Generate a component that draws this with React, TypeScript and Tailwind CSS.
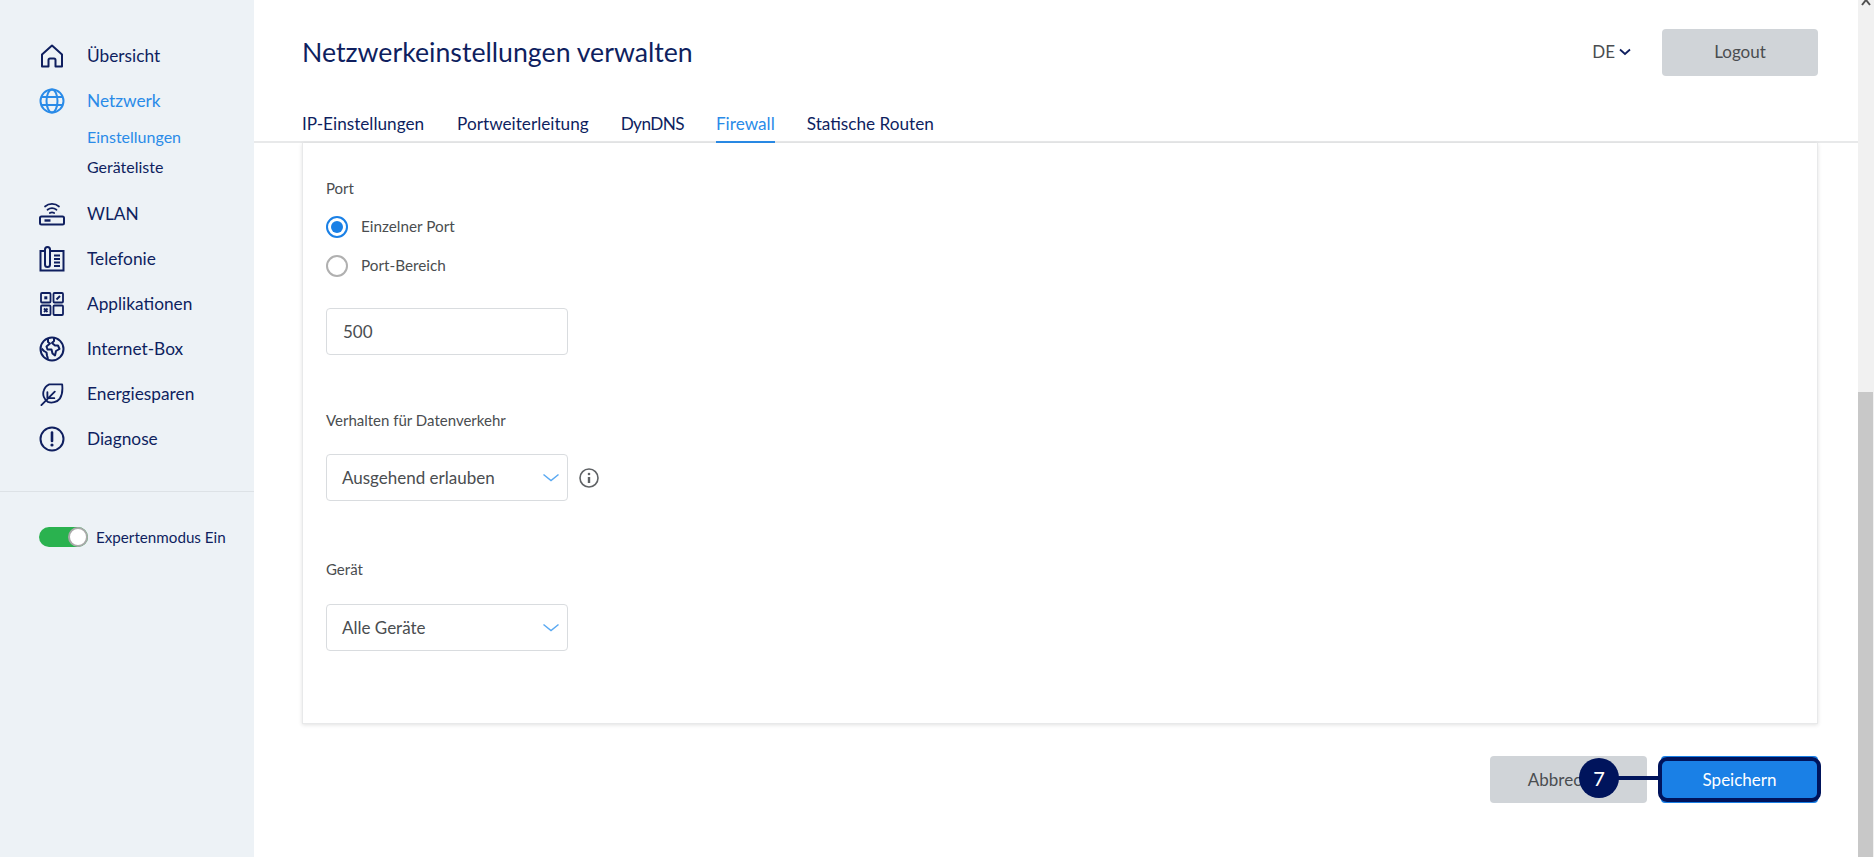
import React from 'react';

const Navy = '#0f1f5f';

const HomeIcon = () => (
  <svg width="26" height="26" viewBox="0 0 26 26" fill="none" stroke="currentColor" strokeWidth="2" strokeLinejoin="round">
    <path d="M3 11.5 13 2.5l10 9V23.5h-6.5V17a1.5 1.5 0 0 0-1.5-1.5h-4A1.5 1.5 0 0 0 9.5 17v6.5H3z" />
  </svg>
);

const GlobeIcon = () => (
  <svg width="26" height="26" viewBox="0 0 26 26" fill="none" stroke="currentColor" strokeWidth="2">
    <circle cx="13" cy="13" r="11.5" />
    <ellipse cx="13" cy="13" rx="5.5" ry="11.5" />
    <path d="M2.5 9h21M2.5 17h21" />
  </svg>
);

const WlanIcon = () => (
  <svg width="26" height="26" viewBox="0 0 26 26" fill="none" stroke="currentColor" strokeWidth="2" strokeLinecap="round">
    <rect x="1" y="15.5" width="24" height="8" rx="1.5" />
    <path d="M5.5 19.500h6" strokeWidth="2.400" strokeLinecap="butt" />
    <path d="M6 5.500c4-3.400 10-3.400 14 0M8.500 8.800c2.700-2 6.300-2 9 0M10.800 12c1.300-.8 3.100-.8 4.400 0" strokeWidth="1.700" />
  </svg>
);

const PhoneIcon = () => (
  <svg width="26" height="26" viewBox="0 0 26 26" fill="none" stroke="currentColor" strokeWidth="2">
    <path d="M6 5H1.500v19.500h23V5H11" />
    <rect x="6" y="1" width="5" height="20" rx="2.500" />
    <path d="M15 9.500h6M15 13h6M15 16.500h6M15 20h6" strokeWidth="1.800" />
  </svg>
);

const AppsIcon = () => (
  <svg width="24" height="24" viewBox="0 0 24 24" fill="none" stroke="currentColor" strokeWidth="1.800">
    <rect x="1" y="1" width="9.500" height="9.500" rx="1" />
    <rect x="13.500" y="1" width="9.500" height="9.500" rx="1" />
    <rect x="1" y="13.500" width="9.500" height="9.500" rx="1" />
    <rect x="13.500" y="13.500" width="9.500" height="9.500" rx="1" />
    <rect x="4.300" y="4.300" width="3" height="3" fill="currentColor" stroke="none" />
    <path d="M16.500 7.500l3.500-3.500" strokeWidth="2" />
    <path d="M4 16.500l3.500 3.500M7.500 16.500 4 20" strokeWidth="1.800" />
  </svg>
);

const BoxIcon = () => (
  <svg width="26" height="26" viewBox="0 0 26 26" fill="none" stroke="currentColor" strokeWidth="2" strokeLinejoin="round">
    <circle cx="13" cy="13" r="11.500" />
    <path d="M9 2.500V6l2 1.500-3.500 3 1 3h4l1 4 2.500 2 1-4.500 3.500-2-1.500-3.500h-3L13 7l2-2V2" />
    <path d="M2.500 12.500 5 15l2.500 1.500.5 3 1 3.500" />
  </svg>
);

const LeafIcon = () => (
  <svg width="24" height="24" viewBox="0 0 26 26" fill="none" stroke="currentColor" strokeWidth="2" strokeLinecap="round" strokeLinejoin="round">
    <path d="M10 2.500h14c.8 7-.5 12.500-2.500 15.500-3 4-9 5.200-13 3.500C4.500 19 2.500 14 4 9.500 5 6 7 3.800 10 2.500z" />
    <path d="M1.500 25 16 10.500M8 17.500V11M8 17.500h7.500" />
  </svg>
);

const AlertIcon = () => (
  <svg width="26" height="26" viewBox="0 0 26 26" fill="none" stroke="currentColor" strokeWidth="2">
    <circle cx="13" cy="13" r="11.500" />
    <path d="M13 6.500v8.500" strokeWidth="2.600" strokeLinecap="round" />
    <circle cx="13" cy="19" r="1.600" fill="currentColor" stroke="none" />
  </svg>
);

const NavItem = ({ icon, label, active }: { icon: React.ReactNode; label: string; active?: boolean }) => (
  <div className={`flex h-[45px] items-center ${active ? 'text-[#2a8be8]' : 'text-[#0f1f5f]'}`}>
    <span className="flex w-[48px] justify-center">{icon}</span>
    <span className="ml-[11px] text-[17.3px]">{label}</span>
  </div>
);

const SelectBox = ({ value }: { value: string }) => (
  <div className="flex h-[47px] w-[242px] items-center justify-between rounded-[4px] border border-[#d9dcdf] pl-[15px] pr-[7px] text-[17px] text-[#4a4d50]">
    <span>{value}</span>
    <svg className="text-[#5aa9f2]" width="18" height="10" viewBox="0 0 18 10" fill="none" stroke="currentColor" strokeWidth="1.500">
      <path d="M1.500 1.500 9 7.500l7.500-6" />
    </svg>
  </div>
);

export default function App() {
  return (
    <div className="flex h-[857px] w-[1874px] overflow-hidden bg-white font-['Lato','Noto_Sans',sans-serif]" style={{ color: Navy }}>
      {/* Sidebar */}
      <aside className="flex w-[254px] shrink-0 flex-col bg-[#edf2f6] pt-[33px]">
        <div className="pl-[28px]">
          <NavItem icon={<HomeIcon />} label="Übersicht" />
          <NavItem icon={<GlobeIcon />} label="Netzwerk" active />
          <div className="-mt-[1px] flex flex-col pb-[9px] pl-[59px] text-[16px]">
            <span className="flex h-[30px] items-center text-[#2a8be8]">Einstellungen</span>
            <span className="flex h-[30px] items-center text-[#0f1f5f]">Geräteliste</span>
          </div>
          <NavItem icon={<WlanIcon />} label="WLAN" />
          <NavItem icon={<PhoneIcon />} label="Telefonie" />
          <NavItem icon={<AppsIcon />} label="Applikationen" />
          <NavItem icon={<BoxIcon />} label="Internet-Box" />
          <NavItem icon={<LeafIcon />} label="Energiesparen" />
          <NavItem icon={<AlertIcon />} label="Diagnose" />
        </div>
        <div className="mt-[30px] border-t border-[#dde2e6]" />
        <div className="mt-[34px] flex items-center pl-[39px]">
          <div className="flex h-[20px] w-[49px] items-center justify-end rounded-full bg-[#2ab24f]">
            <div className="h-[20px] w-[20px] rounded-full border-2 border-[#a9a9a9] bg-white" />
          </div>
          <span className="ml-[8px] text-[15.2px] text-[#0f1f5f]">Expertenmodus Ein</span>
        </div>
      </aside>

      {/* Main */}
      <main className="flex min-w-0 flex-1 flex-col">
        <header className="h-[143px] shrink-0 border-b-2 border-[#e8e9ea] pl-[48px] pr-[40px]">
          <div className="flex h-[104px] items-center justify-between">
            <h1 className="text-[26.7px] font-normal text-[#0f1f5f]">Netzwerkeinstellungen verwalten</h1>
            <div className="flex items-center">
              <span className="text-[17px] text-[#4a4d50]">DE</span>
              <svg className="ml-[4px] text-[#0f1f5f]" width="12" height="8" viewBox="0 0 12 8" fill="none" stroke="currentColor" strokeWidth="1.800">
                <path d="M1 1.500 6 6l5-4.500" />
              </svg>
              <button className="ml-[31px] h-[47px] w-[156px] rounded-[4px] bg-[#d0d4d8] text-[17px] text-[#4a4d50]">Logout</button>
            </div>
          </div>
          <nav className="flex gap-[32px] text-[17.2px] leading-[26px] text-[#0f1f5f]">
            <span className="mr-[1px] h-[38px] pt-[7px]">IP-Einstellungen</span>
            <span className="h-[38px] pt-[7px]">Portweiterleitung</span>
            <span className="h-[38px] pt-[7px] tracking-[-0.6px]">DynDNS</span>
            <span className="h-[39px] border-b-2 border-[#2a8be8] pt-[7px] text-[#2a8be8]">Firewall</span>
            <span className="h-[38px] pt-[7px]">Statische Routen</span>
          </nav>
        </header>

        <div className="flex-1 pl-[48px] pr-[40px]">
          <section className="h-[581px] border-x border-b border-[#e8e9ea] pl-[23px] pt-[34px] shadow-[0_1px_4px_rgba(0,0,0,0.12)]">
            <div className="text-[15px] text-[#4a4d50]">Port</div>
            <div className="mt-[7.5px] flex h-[39px] items-center gap-[13px]">
              <span className="flex h-[22px] w-[22px] items-center justify-center rounded-full border-2 border-[#1a80e6]">
                <span className="h-[12px] w-[12px] rounded-full bg-[#1a80e6]" />
              </span>
              <span className="text-[15.3px] text-[#4a4d50]">Einzelner Port</span>
            </div>
            <div className="flex h-[39px] items-center gap-[13px]">
              <span className="h-[22px] w-[22px] rounded-full border-2 border-[#b0b0b0]" />
              <span className="text-[15.3px] text-[#4a4d50]">Port-Bereich</span>
            </div>
            <div className="mt-[23px] flex h-[47px] w-[242px] items-center rounded-[4px] border border-[#d9dcdf] pl-[16px] text-[17px] text-[#4a4d50]">500</div>

            <div className="mt-[54px] text-[15px] text-[#4a4d50]">Verhalten für Datenverkehr</div>
            <div className="mt-[22.5px] flex items-center">
              <SelectBox value="Ausgehend erlauben" />
              <svg className="ml-[11px] text-[#5f6265]" width="20" height="20" viewBox="0 0 20 20" fill="none" stroke="currentColor" strokeWidth="1.600">
                <circle cx="10" cy="10" r="9" />
                <circle cx="10" cy="6" r="1.300" fill="currentColor" stroke="none" />
                <path d="M10 9v6" strokeWidth="2.400" />
              </svg>
            </div>

            <div className="mt-[57px] text-[15px] text-[#4a4d50]">Gerät</div>
            <div className="mt-[23.5px]">
              <SelectBox value="Alle Geräte" />
            </div>
          </section>

          <div className="relative mt-[32px] flex justify-end gap-[14px]">
            <button className="h-[47px] w-[157px] rounded-[4px] bg-[#d0d4d8] text-[17px] text-[#4a4d50]">Abbrechen</button>
            <button className="h-[47px] w-[157px] rounded-[4px] bg-[#1a80e6] text-[17px] text-white">Speichern</button>
            {/* Callout over the buttons */}
            <div className="absolute -right-[3px] bottom-[1px] top-[1px] w-[163px] rounded-[9px] border-[4px] border-[#00145c]" />
            <div className="absolute right-[158px] top-[20px] h-[4px] w-[60px] bg-[#00145c]" />
            <div className="absolute right-[199px] top-[2px] flex h-[40px] w-[40px] items-center justify-center rounded-full bg-[#00145c] text-[20px] font-medium text-white">7</div>
          </div>
        </div>
      </main>

      {/* Scrollbar */}
      <div className="flex w-[16px] shrink-0 flex-col bg-[#f1f1f1]">
        <div className="flex h-[392px] justify-center">
          <svg width="10" height="6" viewBox="0 0 10 6" fill="none" stroke="#505050" strokeWidth="2">
            <path d="M1 5l4-5 4 5" />
          </svg>
        </div>
        <div className="mr-[1px] flex-1 bg-[#c8c8c8]" />
      </div>
    </div>
  );
}
